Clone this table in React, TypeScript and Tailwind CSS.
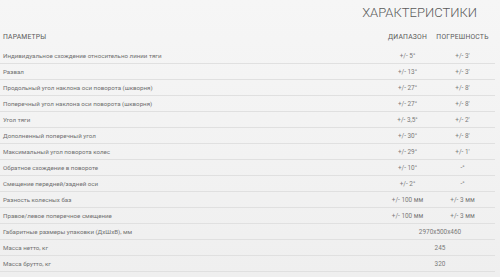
import React from "react";

type Row = { name: string; a: string; b?: string; span?: boolean };

const rows: Row[] = [
  { name: "Индивидуальное схождение относительно линии тяги", a: "+/- 5°", b: "+/- 3'" },
  { name: "Развал", a: "+/- 13°", b: "+/- 3'" },
  { name: "Продольный угол наклона оси поворота (шкворня)", a: "+/- 27°", b: "+/- 8'" },
  { name: "Поперечный угол наклона оси поворота (шкворня)", a: "+/- 27°", b: "+/- 8'" },
  { name: "Угол тяги", a: "+/- 3,5°", b: "+/- 2'" },
  { name: "Дополненный поперечный угол", a: "+/- 30°", b: "+/- 8'" },
  { name: "Максимальный угол поворота колес", a: "+/- 29°", b: "+/- 1'" },
  { name: "Обратное схождение в повороте", a: "+/- 10°", b: "-°" },
  { name: "Смещение передней/задней оси", a: "+/- 2°", b: "-°" },
  { name: "Разность колесных баз", a: "+/- 100 мм", b: "+/- 3 мм" },
  { name: "Правое/левое поперечное смещение", a: "+/- 100 мм", b: "+/- 3 мм" },
  { name: "Габаритные размеры упаковки (ДхШхВ), мм", a: "2970x500x460", span: true },
  { name: "Масса нетто, кг", a: "245", span: true },
  { name: "Масса брутто, кг", a: "320", span: true },
];

export default function App() {
  return (
    <div
      className="w-[500px] h-[277px] overflow-hidden bg-gradient-to-b from-[#f6f6f6] to-[#efefef] text-[#707070]"
      style={{ fontFamily: "Roboto, 'Liberation Sans', Arial, sans-serif" }}
    >
      <div className="w-[495px]">
        <div className="h-[26px] flex items-start justify-end pr-[18px] pt-[5px]">
          <span className="text-[13px] leading-[16px] font-light text-[#5a5a5a]">
            ХАРАКТЕРИСТИКИ
          </span>
        </div>
        <div className="h-[22px] grid grid-cols-[385px_45px_65px] items-center text-[6.8px] text-[#5a5a5a] pt-[1px]">
          <div className="pl-[3px] tracking-[0.2px]">ПАРАМЕТРЫ</div>
          <div className="text-center whitespace-nowrap tracking-[0.2px]">ДИАПАЗОН</div>
          <div className="text-center whitespace-nowrap tracking-[0.2px]">ПОГРЕШНОСТЬ</div>
        </div>
        {rows.map((r, i) => (
          <div
            key={i}
            className="h-[16px] grid grid-cols-[385px_45px_65px] items-center border-b border-[#e0e0e0] text-[6.2px] leading-[8px]"
          >
            <div className="pl-[3px] whitespace-nowrap">{r.name}</div>
            {r.span ? (
              <div className="col-span-2 text-center whitespace-nowrap text-[#7a7a7a] text-[6.4px]">{r.a}</div>
            ) : (
              <>
                <div className="text-center whitespace-nowrap text-[#7a7a7a] text-[6.4px]">{r.a}</div>
                <div className="text-center whitespace-nowrap text-[#7a7a7a] text-[6.4px]">{r.b}</div>
              </>
            )}
          </div>
        ))}
      </div>
    </div>
  );
}
